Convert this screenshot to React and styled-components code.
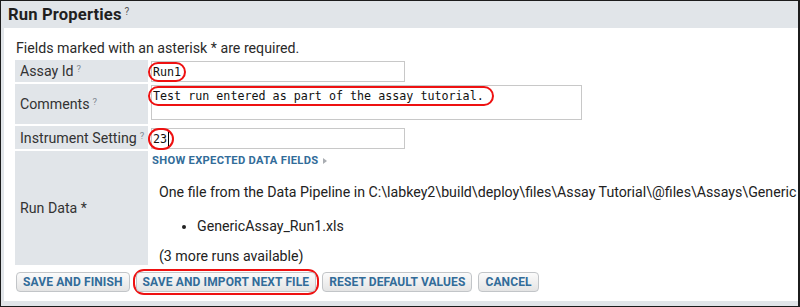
import React from "react";
import styled, { createGlobalStyle } from "styled-components";

const Global = createGlobalStyle`
  html, body { margin: 0; padding: 0; background: #fff; }
  body { font-family: Roboto, "Noto Sans", Arial, sans-serif; color: #222; }
`;

const GRAY = "#e1e5e9";
const BLUE = "#326c99";

const Frame = styled.div`
  width: 800px;
  height: 307px;
  box-sizing: border-box;
  border: 1px solid #1c1c1c;
  border-right-width: 2px;
  overflow: hidden;
  display: flex;
  flex-direction: column;
  background: #fff;
`;

const Header = styled.div`
  height: 27px;
  flex: none;
  background: ${GRAY};
  display: flex;
  align-items: center;
  padding-left: 7px;
  font-size: 16.6px;
  font-weight: 700;
  color: #1f1f1f;
  letter-spacing: 0.15px;
`;

const Help = styled.sup`
  font-size: ${(p) => (p.$big ? "10px" : "9.5px")};
  font-weight: 400;
  color: ${(p) => (p.$big ? "#555" : "#7f8892")};
  margin-left: 3px;
  position: relative;
  top: ${(p) => (p.$big ? "-3px" : "-2px")};
  vertical-align: super;
  line-height: 0;
`;

const Body = styled.div`
  flex: 1;
  border-left: 3px solid ${GRAY};
  border-bottom: 5px solid ${GRAY};
  padding: 10px 0 0 11px;
  min-width: 0;
`;

const Note = styled.div`
  height: 20px;
  line-height: 20px;
  font-size: 14.2px;
  color: #2a2a2a;
  padding-left: 1px;
  margin-bottom: 2px;
`;

const Table = styled.div`
  display: grid;
  grid-template-columns: 133px 1fr;
  grid-template-rows: 22px 40px 23px 114px;
  gap: 2px;
`;

const Label = styled.div`
  background: ${GRAY};
  display: flex;
  align-items: center;
  padding-left: 5px;
  font-size: 14.2px;
  color: #333;
  white-space: nowrap;
`;

const Value = styled.div`
  padding: ${(p) => p.$pad || "1px 0 0 1px"};
  white-space: nowrap;
  min-width: 0;
`;

const Field = styled.div`
  box-sizing: border-box;
  width: ${(p) => p.$w}px;
  height: ${(p) => p.$h}px;
  border: 1px solid #c8c8c8;
  background: #fff;
  display: flex;
  align-items: ${(p) => (p.$top ? "flex-start" : "center")};
  font-family: "DejaVu Sans Mono", "Liberation Mono", monospace;
  font-size: 11.7px;
  color: #111;
`;

const Mark = styled.span`
  display: inline-flex;
  align-items: center;
  box-sizing: border-box;
  border: 2px solid #ee1111;
  border-radius: 12px;
  height: ${(p) => p.$h || 20}px;
  margin-left: -4px;
  padding: 0 ${(p) => p.$pr || 6}px 0 3px;
`;

const Caret = styled.span`
  display: inline-block;
  width: 1px;
  height: 14px;
  background: #000;
  margin-left: 1px;
`;

const Toggle = styled.div`
  height: 16px;
  line-height: 16px;
  margin-top: 1px;
  font-size: 11.2px;
  font-weight: 700;
  color: ${BLUE};
  letter-spacing: 0.3px;
  display: flex;
  align-items: center;
`;

const Arrow = styled.span`
  display: inline-block;
  width: 0;
  height: 0;
  border-top: 3.5px solid transparent;
  border-bottom: 3.5px solid transparent;
  border-left: 4px solid #a9adb2;
  margin-left: 5px;
`;

const Para = styled.div`
  font-size: 14.2px;
  line-height: 16px;
  color: #222;
  margin: ${(p) => p.$m};
  padding-left: 7px;
`;

const Bullets = styled.ul`
  margin: 18px 0 0 0;
  padding-left: 45px;
  font-size: 14.2px;
  line-height: 16px;
  color: #222;
`;

const Actions = styled.div`
  display: flex;
  align-items: center;
  gap: 6px;
  margin-top: 7px;
  padding-left: 1px;
`;

const Button = styled.button`
  height: 20px;
  box-sizing: border-box;
  padding: 0 6px;
  border: 1px solid #c2c5c8;
  border-radius: 4px;
  background: linear-gradient(#fbfbfb, #e4e4e4);
  font-family: Roboto, "Noto Sans", Arial, sans-serif;
  font-size: 12px;
  font-weight: 700;
  letter-spacing: 0.12px;
  text-transform: uppercase;
  color: ${BLUE};
  cursor: pointer;
  white-space: nowrap;
`;

const ButtonMark = styled.span`
  display: inline-flex;
  border: 2px solid #ee1111;
  border-radius: 11px;
  padding: 1px 1px;
  margin: -3px -3px;
`;

export default function App() {
  return (
    <>
      <Global />
      <Frame>
        <Header>
          Run Properties<Help $big>?</Help>
        </Header>
        <Body>
          <Note>Fields marked with an asterisk * are required.</Note>
          <Table>
            <Label>
              Assay Id<Help>?</Help>
            </Label>
            <Value>
              <Field $w={254} $h={21}>
                <Mark $pr={3}>Run1</Mark>
              </Field>
            </Value>

            <Label>
              Comments<Help>?</Help>
            </Label>
            <Value $pad="1px 0 0 1px">
              <Field $w={431} $h={35} $top>
                <Mark $h={20} $pr={8}>
                  Test run entered as part of the assay tutorial.
                </Mark>
              </Field>
            </Value>

            <Label>
              Instrument Setting<Help>?</Help>
            </Label>
            <Value $pad="2px 0 0 1px">
              <Field $w={254} $h={21}>
                <Mark $pr={3} $h={22}>
                  23<Caret />
                </Mark>
              </Field>
            </Value>

            <Label>Run Data *</Label>
            <Value $pad="1px 0 0 2px">
              <Toggle>
                SHOW EXPECTED DATA FIELDS<Arrow />
              </Toggle>
              <Para $m="15px 0 0 0">
                One file from the Data Pipeline in C:\labkey2\build\deploy\files\Assay Tutorial\@files\Assays\Generic
              </Para>
              <Bullets>
                <li>GenericAssay_Run1.xls</li>
              </Bullets>
              <Para $m="14px 0 0 0">(3 more runs available)</Para>
            </Value>
          </Table>
          <Actions>
            <Button>Save and Finish</Button>
            <ButtonMark>
              <Button>Save and Import Next File</Button>
            </ButtonMark>
            <Button>Reset Default Values</Button>
            <Button>Cancel</Button>
          </Actions>
        </Body>
      </Frame>
    </>
  );
}
